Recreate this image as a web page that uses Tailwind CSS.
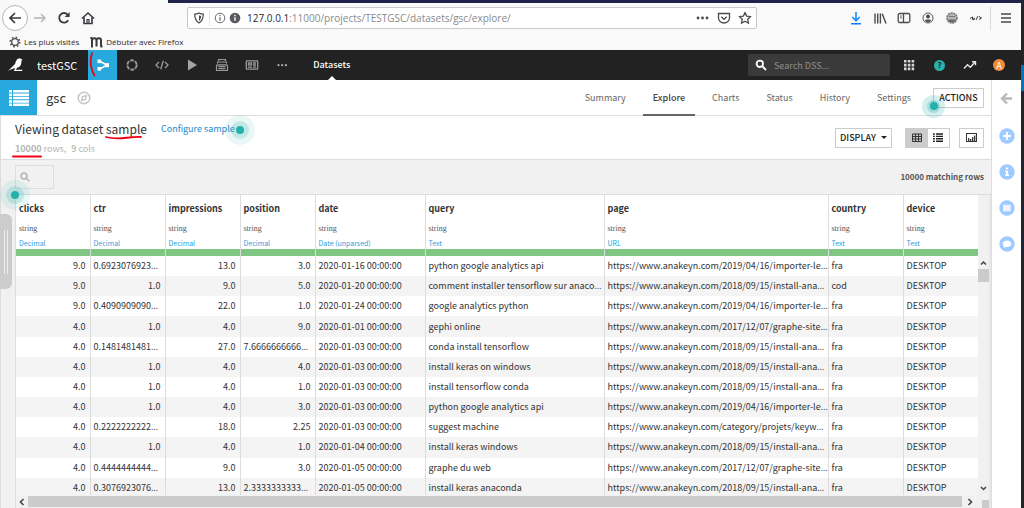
<!DOCTYPE html>
<html lang="en">
<head>
<meta charset="utf-8">
<title>gsc - Explore</title>
<meta name="viewport" content="width=device-width, initial-scale=1">
<script src="https://cdn.jsdelivr.net/npm/@tailwindcss/browser@4"></script>
</head>
<body class="h-screen overflow-hidden bg-[#f9f9fa] font-['Noto_Sans_CJK_KR',sans-serif] text-[#333]">
<div class="flex h-full">
<div class="flex min-w-0 flex-1 flex-col">

<!-- Browser chrome -->
<header class="shrink-0 bg-[#f9f9fa] font-['Open_Sans',sans-serif] text-[#38383d]">
  <div class="ml-[168px] h-[3px] bg-[#20234a]"></div>
  <div class="flex h-[30px] items-center">
    <nav class="flex w-[187px] items-center pl-[2px]" aria-label="Navigation">
      <button aria-label="Back" class="flex size-[26px] items-center justify-center rounded-full border border-[#b5b5b8] bg-white"><svg class="size-4" viewBox="0 0 16 16" fill="none" stroke="#3a3a3f" stroke-width="1.7"><path d="M14 8H3M8 3L3 8l5 5"/></svg></button>
      <button aria-label="Forward" class="ml-1 flex size-4 items-center justify-center"><svg class="size-4" viewBox="0 0 16 16" fill="none" stroke="#b4b4b7" stroke-width="1.4"><path d="M2 8h11M9 4l4 4-4 4"/></svg></button>
      <button aria-label="Reload" class="ml-2 flex size-4 items-center justify-center"><svg class="size-4" viewBox="0 0 16 16" fill="none" stroke="#3a3a3f" stroke-width="1.8"><path d="M12.2 10.2A4.8 4.8 0 1 1 11.6 4.6"/><path d="M13.6 2v5h-5z" fill="#3a3a3f" stroke="none"/></svg></button>
      <button aria-label="Home" class="ml-2 flex size-4 items-center justify-center"><svg class="size-4" viewBox="0 0 16 16" fill="none" stroke="#3a3a3f" stroke-width="1.6"><path d="M2 8.5L8 3l6 5.500M4 7.500v6h8v-6"/><path d="M7 13.500v-4h2v4" stroke-width="1.200"/></svg></button>
    </nav>
    <div class="flex h-[22px] w-[570px] items-center rounded-xs border border-[#c9c9cc] bg-white pl-1 pr-1">
      <svg class="size-3 ml-[1px]" viewBox="0 0 12 12" fill="none" stroke="#4a4a4f" stroke-width="1.200"><path d="M6 1c1.500.8 3 1.100 4.300 1.100C10.300 6.500 9 9.500 6 11 3 9.500 1.700 6.500 1.700 2.100 3 2.100 4.500 1.800 6 1z"/><path d="M6 3.300c.8.4 1.400.6 2.200.7C8 6.500 7.300 8 6 9z" fill="#4a4a4f" stroke="none"/></svg>
      <span class="ml-1 h-4 w-px bg-[#e3e3e5]"></span>
      <svg class="ml-1 size-3" viewBox="0 0 12 12" fill="none" stroke="#6a6a6e"><circle cx="6" cy="6" r="4.800"/><path d="M6 5.200v3.600M6 3v1.300" stroke-width="1.300"/></svg>
      <svg class="ml-[3px] size-3" viewBox="0 0 12 12"><circle cx="6" cy="6" r="5.300" fill="#5a5a5e"/><path d="M6 5.200v3.600M6 2.800v1.400" stroke="#fff" stroke-width="1.400"/></svg>
      <div contenteditable="true" role="textbox" aria-label="Address" class="min-w-0 flex-1 whitespace-nowrap pl-[6px] text-[10px] leading-4 text-[#8a8a8d]"><span class="text-[#2a2a2e]">127.0.0.1</span>:11000/projects/TESTGSC/datasets/gsc/explore/</div>
      <button aria-label="Page actions"><svg class="h-4 w-[14px]" viewBox="0 0 14 16" fill="#4a4a4f"><circle cx="3" cy="8" r="1.400"/><circle cx="7.500" cy="8" r="1.400"/><circle cx="12" cy="8" r="1.400"/></svg></button>
      <button aria-label="Save to Pocket" class="ml-2"><svg class="size-[14px]" viewBox="0 0 14 14" fill="none" stroke="#4a4a4f" stroke-width="1.300"><path d="M1.500 2.500h11V7a5.500 5 0 0 1-11 0z"/><path d="M4.300 5.700L7 8.300l2.700-2.600"/></svg></button>
      <button aria-label="Bookmark this page" class="ml-[7px]"><svg class="size-[14px]" viewBox="0 0 14 14" fill="none" stroke="#4a4a4f" stroke-width="1.300" stroke-linejoin="round"><path d="M7 1.500l1.700 3.700 4 .4-3 2.700.9 4L7 10.200l-3.600 2.100.9-4-3-2.700 4-.4z"/></svg></button>
    </div>
    <div class="ml-auto flex items-center text-[#4a4a4f]">
      <button aria-label="Downloads"><svg class="size-[14px]" viewBox="0 0 14 14" fill="none" stroke="#0a84ff" stroke-width="1.500"><path d="M7 1v8.500M3.300 6L7 9.700 10.700 6M2 12.700h10"/></svg></button>
      <button aria-label="Library" class="ml-[10px]"><svg class="size-[14px]" viewBox="0 0 14 14" fill="none" stroke="#4a4a4f" stroke-width="1.400"><path d="M2 2.500v10M4.700 2.500v10M7.400 2.500v10M9.200 2.700l3.800 9.800"/></svg></button>
      <button aria-label="Sidebars" class="ml-[10px]"><svg class="size-[14px]" viewBox="0 0 14 14" fill="none" stroke="#4a4a4f" stroke-width="1.300"><rect x="1.200" y="2.500" width="11.600" height="9" rx="1.500"/><path d="M6.500 2.500v9"/><path d="M3 5h2M3 6.800h2" stroke-width=".8"/></svg></button>
      <button aria-label="Account" class="ml-[10px]"><svg class="size-[14px]" viewBox="0 0 14 14"><circle cx="7" cy="7" r="5" fill="none" stroke="#5a5a5e"/><circle cx="7" cy="5.600" r="2" fill="#4a4a4f"/><path d="M3.700 9.600c1-1.500 5.600-1.500 6.600 0A4.200 4.200 0 0 1 3.700 9.600z" fill="#4a4a4f"/></svg></button>
      <button aria-label="Extension" class="ml-[10px]"><svg class="size-[14px]" viewBox="0 0 14 14"><circle cx="7" cy="7" r="5" fill="#b7b7b9" stroke="#77777a" stroke-width="1.600" stroke-dasharray="2 .7"/><path d="M3 8.500h8c-.5 2.500-2.300 3-4 3s-3.500-.5-4-3z" fill="#6a6a6c"/><path d="M4 5.500h6" stroke="#777"/></svg></button>
      <button aria-label="Developer tools" class="ml-[10px]"><svg class="size-[14px]" viewBox="0 0 14 14" fill="none" stroke="#3a3a3f" stroke-width="1"><path d="M1 7.500L3.500 6v2.500L6 7M7 9l2-4M10 5.500L12.500 7 10 8.500M3.500 8.500h2"/></svg></button>
      <span class="ml-[7px] h-6 w-px bg-[#dadadc]"></span>
      <button aria-label="Open menu" class="ml-2 mr-2"><svg class="size-[14px]" viewBox="0 0 14 14" stroke="#4a4a4f" stroke-width="1.300"><path d="M2 3h10M2 7h10M2 11h10"/></svg></button>
    </div>
  </div>
  <div class="flex h-[17px] items-center pl-[9px] text-[8px] leading-4 text-[#2a2a2e]">
    <a href="#" class="flex items-center whitespace-nowrap"><svg class="size-3" viewBox="0 0 12 12" fill="none" stroke="#4a4a4f"><circle cx="6" cy="6" r="3.300" stroke-width="1.300"/><circle cx="6" cy="6" r="4.800" stroke-width="1.400" stroke-dasharray="1.600 2.170"/></svg><span class="ml-[3px]">Les plus visités</span></a>
    <a href="#" class="ml-[11px] flex items-center whitespace-nowrap"><svg class="h-3 w-[13px]" viewBox="0 0 13 12" fill="none" stroke="#3a3a3f" stroke-width="2"><path d="M2 10.500V2M6.500 10.500V4.500Q6.500 2.300 4.500 2.300 2 2.300 2 4.500M11 10.500V4.500Q11 2.300 9 2.300 6.500 2.300 6.500 4.500M.3 2h2M1 10.500h2M10.500 10.500h2"/></svg><span class="ml-[3px]">Débuter avec Firefox</span></a>
  </div>
</header>

<!-- Application bar -->
<nav class="flex h-[30px] shrink-0 items-center bg-[#222] text-[11px] leading-4 text-white" aria-label="Project">
  <a href="#" aria-label="Home" class="ml-[7px]"><svg class="size-[18px]" viewBox="0 0 18 18"><path d="M.8 15.200L8 8C8.900 4.600 10.300 2.300 12.500 2.300c.9 0 1.500.4 1.800 1l1.500.5-1.300.6c.1 4.100-1.300 6.600-4.300 7.400l-1.500 2h6.500v1.100H6.800l1.500-2.600C5.800 12.600 3.400 13.500.8 15.200z" fill="#fff"/></svg></a>
  <a href="#" class="ml-3">testGSC</a>
  <a href="#" aria-label="Flow" class="relative ml-[11px] flex h-full w-[29px] items-center justify-center bg-[#28a9dd]">
    <svg class="size-[14px]" viewBox="0 0 14 14"><path d="M3.500 3L11 7.200 3.500 11" fill="none" stroke="#fff" stroke-width="1.600"/><rect x="1.500" y="1.500" width="3.600" height="3.600" fill="#fff"/><rect x="1.500" y="9" width="3.600" height="3.600" fill="#fff"/><rect x="9" y="5.200" width="4" height="4" fill="#fff"/></svg>
    <svg class="absolute left-[1px] top-[1px] h-[26px] w-2" viewBox="0 0 8 26" fill="none" stroke="#f00012" stroke-width="1.800" stroke-linecap="round"><path d="M3 2C.5 9 1.500 18 5.500 24.500"/></svg>
  </a>
  <a href="#" aria-label="Lab" class="ml-2"><svg class="size-[14px]" viewBox="0 0 14 14" fill="none" stroke="#9a9a9a" stroke-width="1.900"><circle cx="7" cy="7" r="4.700" stroke-dasharray="3.900 1.020"/></svg></a>
  <a href="#" aria-label="Code" class="ml-4"><svg class="size-[14px]" viewBox="0 0 14 14" fill="none" stroke="#9a9a9a" stroke-width="1.300"><path d="M4 4L1 7l3 3M10 4l3 3-3 3M8.300 2.700L5.700 11.300"/></svg></a>
  <a href="#" aria-label="Jobs" class="ml-4"><svg class="size-[14px]" viewBox="0 0 14 14" fill="#a3a3a3"><path d="M3 1.500L12 7l-9 5.500z"/></svg></a>
  <a href="#" aria-label="Automation" class="ml-4"><svg class="size-[14px]" viewBox="0 0 14 14" fill="none" stroke="#9a9a9a" stroke-width="1.200"><path d="M3.500 3V1.500h7V3M2.500 5.500V4h9v1.500M1.500 12.500V8q0-1.200 1-1.200h9q1 0 1 1.200v4.500z"/><path d="M3.500 8.700h7M3.500 10.600h7"/></svg></a>
  <a href="#" aria-label="Dashboards" class="ml-4"><svg class="size-[14px]" viewBox="0 0 14 14" fill="none" stroke="#9a9a9a" stroke-width="1.300"><rect x="1.300" y="2.800" width="11.400" height="8.400" rx=".6"/><rect x="3.500" y="5" width="3" height="2"/><path d="M3 9.200h4M8 5h3M8 7h3M8 9.200h3"/></svg></a>
  <a href="#" aria-label="More" class="ml-4"><svg class="size-[14px]" viewBox="0 0 14 14" fill="#b0b0b0"><circle cx="3.500" cy="7.200" r="1.100"/><circle cx="7.200" cy="7.200" r="1.100"/><circle cx="10.900" cy="7.200" r="1.100"/></svg></a>
  <a href="#" class="relative ml-6 flex h-full items-center text-[9px] font-medium">Datasets<span class="absolute bottom-0 left-1/2 -ml-1 border-x-4 border-b-4 border-x-transparent border-b-white"></span></a>
  <label class="ml-auto flex h-[22px] w-[142px] items-center rounded-xs bg-[#3a3a3a] pl-[7px]">
    <svg class="size-3 shrink-0" viewBox="0 0 12 12" fill="none" stroke="#fff" stroke-width="1.800"><circle cx="4.800" cy="4.800" r="3.200"/><path d="M7.200 7.200l3.800 3.800"/></svg>
    <input type="text" aria-label="Search DSS" placeholder="Search DSS..." class="ml-[7px] h-5 w-full min-w-0 bg-transparent text-[9px] text-white outline-none placeholder:text-[#8f8f8f]">
  </label>
  <button aria-label="Applications" class="ml-[13px]"><svg class="size-3" viewBox="0 0 12 12" fill="#d5d5d5"><path d="M1 1h2.600v2.600H1zM4.800 1h2.600v2.600H4.800zM8.600 1h2.600v2.600H8.600zM1 4.800h2.600v2.600H1zM4.800 4.800h2.600v2.600H4.800zM8.600 4.800h2.600v2.600H8.600zM1 8.600h2.600v2.600H1zM4.800 8.600h2.600v2.600H4.800zM8.600 8.600h2.600v2.600H8.600z"/></svg></button>
  <button aria-label="Help" class="ml-[19px] flex size-[11px] items-center justify-center rounded-full bg-[#2ab1ac] text-[8px] font-bold leading-none text-[#222]">?</button>
  <button aria-label="Activity" class="ml-[18px]"><svg class="size-[14px]" viewBox="0 0 14 14" fill="none" stroke="#e5e5e5" stroke-width="1.400"><path d="M1 10.500l3.500-3.800 2.800 2.500L12 4.200M9 3.700h3.500v3.500"/></svg></button>
  <button aria-label="Account menu" class="ml-4 mr-4 flex size-3 items-center justify-center rounded-full bg-[#f28c38] text-[9px] leading-none text-white">A</button>
</nav>

<div class="flex min-h-0 flex-1 bg-white">
<main class="flex min-w-0 flex-1 flex-col border-r border-[#ddd]">

  <!-- Dataset title and tabs -->
  <div class="flex h-9 shrink-0 border-b border-[#ddd]">
    <a href="#" aria-label="Dataset" class="flex w-[37px] items-center justify-center bg-[#28a9dd]"><svg class="h-4 w-5" viewBox="0 0 20 16" fill="#fff"><path d="M0 0h3v2.500H0zM4 0h16v2.500H4zM0 3.400h3v2.500H0zM4 3.400h16v2.500H4zM0 6.800h3v2.500H0zM4 6.800h16v2.500H4zM0 10.200h3v2.500H0zM4 10.200h16v2.500H4zM0 13.500h3V16H0zM4 13.500h16V16H4z"/></svg></a>
    <h1 class="ml-[9px] self-center text-[13px] leading-5">gsc</h1>
    <button aria-label="Navigate" class="ml-[11px]"><svg class="size-[14px]" viewBox="0 0 14 14" fill="none" stroke="#c4c4c4"><circle cx="7" cy="7" r="5.800" stroke-width="1.400"/><path d="M4.600 9.400L5.600 5.600l3.800-1-1 3.800z" stroke-width="1.300"/></svg></button>
    <nav class="ml-auto flex items-stretch text-[9px] text-[#666]" aria-label="Dataset views">
      <a href="#" class="flex items-center px-[10px]">Summary</a>
      <a href="#" aria-current="page" class="-mb-px ml-[7px] flex items-center border-b-2 border-[#666] px-[10px] pt-px font-medium text-[#444]">Explore</a>
      <a href="#" class="ml-[7px] flex items-center px-[10px]">Charts</a>
      <a href="#" class="ml-[7px] flex items-center px-[10px]">Status</a>
      <a href="#" class="ml-[7px] flex items-center px-[10px]">History</a>
      <a href="#" class="ml-[7px] flex items-center px-[10px]">Settings</a>
    </nav>
    <div class="relative ml-3 mr-[7px] self-center">
      <button class="flex h-5 w-[51px] items-center justify-center border border-[#ccc] text-[9px] font-medium text-[#222]">ACTIONS</button>
      <span class="absolute -left-[11px] top-[7px] flex size-[23px] items-center justify-center rounded-full bg-[#26b0ab]/20"><span class="flex size-[13px] items-center justify-center rounded-full bg-[#26b0ab]/30"><span class="size-2 rounded-full bg-[#26b0ab]"></span></span></span>
    </div>
  </div>

  <!-- Sample summary and display controls -->
  <div class="flex h-11 shrink-0 items-center border-b border-l border-[#ddd] pl-[14px] pr-[7px]">
    <div>
      <div class="flex items-center">
        <h2 class="relative text-xs leading-5">Viewing dataset sample<svg class="absolute -bottom-[3px] right-[2px] h-2 w-10" viewBox="0 0 40 8" fill="none" stroke="#f00012" stroke-width="1.800" stroke-linecap="round"><path d="M1 3C14 6.500 22 2.500 36 3"/></svg></h2>
        <a href="#" class="relative ml-[14px] text-[9px] leading-4 text-[#1f87cc]">Configure sample<span class="absolute -right-[20px] -top-[6px] flex size-[30px] items-center justify-center rounded-full bg-[#26b0ab]/10"><span class="flex size-[18px] items-center justify-center rounded-full bg-[#26b0ab]/20"><span class="size-2 rounded-full bg-[#26b0ab]"></span></span></span></a>
      </div>
      <p class="relative mt-[2px] flex text-[9px] leading-4 text-[#b5b5b5]"><span><b class="font-bold">10000</b> rows,</span><span class="ml-[5px]"><b class="font-medium">9</b> cols</span><svg class="absolute -left-1 top-[13px] h-1 w-8" viewBox="0 0 32 4" fill="none" stroke="#f00012" stroke-width="2" stroke-linecap="round"><path d="M2 2.500h28"/></svg></p>
    </div>
    <button class="ml-auto flex h-5 w-[57px] items-center justify-center gap-[5px] border border-[#ccc] text-[9px] font-medium text-[#222]">DISPLAY<span class="border-x-[3px] border-t-[3px] border-x-transparent border-t-[#222]"></span></button>
    <div class="ml-[13px] flex h-5 w-[45px] border border-[#ccc]">
      <button aria-label="Table view" class="flex flex-1 items-center justify-center bg-[#ccc]"><svg class="h-[9px] w-[10px]" viewBox="0 0 10 9" fill="none" stroke="#333"><path d="M.5 1h9v7.500h-9zM.5 3.500h9M.5 6h9M3.500 1v7.500M6.500 1v7.500"/></svg></button>
      <button aria-label="List view" class="flex flex-1 items-center justify-center"><svg class="h-[9px] w-[10px]" viewBox="0 0 10 9" fill="none" stroke="#222" stroke-width="1.400"><path d="M0 1h1.800M3 1h7M0 3.400h1.800M3 3.400h7M0 5.800h1.800M3 5.800h7M0 8.200h1.800M3 8.200h7"/></svg></button>
    </div>
    <button aria-label="Column statistics" class="ml-[9px] flex h-5 w-[25px] items-center justify-center border border-[#ccc]"><svg class="h-[9px] w-[11px]" viewBox="0 0 11 9" fill="none" stroke="#333"><rect x=".5" y=".5" width="10" height="8"/><path d="M2.700 8V5M4.700 8V6M6.700 8V4M8.700 8V2.500" stroke-width="1.300"/></svg></button>
  </div>

  <!-- Data explorer -->
  <div class="flex min-h-0 flex-1 border-l border-[#ddd] bg-[#f1f1f1]">
    <div class="relative w-[14px] shrink-0">
      <button aria-label="Open filters" class="absolute -left-px top-[54px] flex h-[75px] w-3 items-center justify-center gap-[2px] rounded-r-md bg-[#ccc]"><span class="h-11 w-px bg-[#eee]"></span><span class="h-11 w-px bg-[#eee]"></span></button>
    </div>
    <div class="flex min-w-0 flex-1 flex-col">
      <div class="relative flex h-[34px] shrink-0 items-center pr-[7px]">
        <label class="flex h-6 w-[39px] items-center border border-[#ddd] pl-1">
          <svg class="size-[10px] shrink-0" viewBox="0 0 10 10" fill="none" stroke="#b5b5b5" stroke-width="1.500"><circle cx="4" cy="4" r="3"/><path d="M6.200 6.200L9.300 9.300"/></svg>
          <input type="text" aria-label="Search columns" class="h-5 w-full min-w-0 bg-transparent text-[9px] outline-none">
        </label>
        <p class="ml-auto text-[8px] font-bold leading-4 text-[#555]">10000 matching rows</p>
        <span class="absolute -left-[15px] top-[20px] z-10 flex size-[30px] items-center justify-center rounded-full bg-[#26b0ab]/10"><span class="flex size-[18px] items-center justify-center rounded-full bg-[#26b0ab]/20"><span class="size-2 rounded-full bg-[#26b0ab]"></span></span></span>
      </div>
      <div class="flex min-h-0 flex-1 border-t border-[#ddd]">
        <div class="flex min-w-0 flex-1 flex-col">
          <div class="min-h-0 flex-1 overflow-hidden border-l border-[#ddd]">
            <table class="h-[303px] w-full table-fixed border-collapse bg-white text-[9px] leading-4">
              <colgroup><col class="w-[74px]"><col class="w-[75px]"><col class="w-[75px]"><col class="w-[75px]"><col class="w-[110px]"><col class="w-[179px]"><col class="w-[224px]"><col class="w-[75px]"><col class="w-[75px]"></colgroup>
              <thead id="columns"></thead>
              <tbody id="rows"></tbody>
            </table>
          </div>
          <div class="flex h-[13px] shrink-0 items-center border-l border-[#ddd] bg-[#f1f1f1]">
            <svg class="w-3 shrink-0" viewBox="0 0 12 12" fill="none" stroke="#444" stroke-width="1.600"><path d="M7.500 3L4.500 6l3 3"/></svg>
            <span class="h-[11px] flex-1 bg-[#cbcbcb]"></span>
            <svg class="w-4 shrink-0" viewBox="0 0 16 12" fill="none" stroke="#444" stroke-width="1.600"><path d="M6.500 3l3 3-3 3"/></svg>
          </div>
        </div>
        <div class="flex w-[11px] shrink-0 flex-col bg-[#f1f1f1] pt-[62px]">
          <svg class="h-3 w-full shrink-0" viewBox="0 0 11 12" fill="none" stroke="#444" stroke-width="1.500"><path d="M3 7.500L5.500 5 8 7.500"/></svg>
          <span class="h-[13px] w-full shrink-0 bg-[#cbcbcb]"></span>
          <svg class="mt-auto h-3 w-full shrink-0" viewBox="0 0 11 12" fill="none" stroke="#444" stroke-width="1.500"><path d="M3 4L5.500 6.500 8 4"/></svg>
          <span class="ml-1 mt-[5px] h-2 w-[7px] shrink-0 bg-[#cbcbcb]"></span>
        </div>
        <div class="w-[2px] shrink-0 bg-[#e8e8e8]"></div>
      </div>
    </div>
  </div>
</main>

<!-- Right action rail -->
<aside class="flex w-[29px] shrink-0 flex-col items-center bg-white pt-3">
  <button aria-label="Open panel"><svg class="size-[13px]" viewBox="0 0 13 13" fill="none" stroke="#b9b9b9" stroke-width="2.400"><path d="M12 6.500H3M7 1.500l-5 5 5 5"/></svg></button>
  <button aria-label="Actions" class="mt-[23px]"><svg class="size-4" viewBox="0 0 16 16"><circle cx="8" cy="8" r="7.700" fill="#9dcaff"/><path d="M8 4v8M4 8h8" stroke="#fff" stroke-width="2.200"/></svg></button>
  <button aria-label="Details" class="mt-5"><svg class="size-4" viewBox="0 0 16 16"><circle cx="8" cy="8" r="7.700" fill="#9dcaff"/><path d="M7 3.500h2.200v2H7zM6 6.700h3.200v4.100h1V12H6v-1.200h1V7.900H6z" fill="#fff"/></svg></button>
  <button aria-label="Schema" class="mt-5"><svg class="size-4" viewBox="0 0 16 16"><circle cx="8" cy="8" r="7.700" fill="#9dcaff"/><path d="M4 4.500h8v7H4z" fill="#d9ebff"/><path d="M4 6.500h6M4 8.200h6M4 10h6" stroke="#fff" stroke-width="1"/></svg></button>
  <button aria-label="Discussions" class="mt-5"><svg class="size-4" viewBox="0 0 16 16"><circle cx="8" cy="8" r="7.700" fill="#9dcaff"/><path d="M8 4.500c2.600 0 4.300 1.400 4.300 3.200S10.600 11 8 11c-.5 0-.9 0-1.300-.1L4.500 12l.5-1.900c-.8-.6-1.300-1.400-1.300-2.400C3.700 5.900 5.400 4.500 8 4.500z" fill="#fff"/></svg></button>
</aside>
</div>
</div>

<!-- Desktop strip beside the window -->
<div class="flex w-[3px] shrink-0 flex-col bg-[#20262b]"><span class="mt-[65px] h-[26px] bg-[#0a74b8]"></span></div>
</div>

<script>
const columns = [["clicks","Decimal"],["ctr","Decimal"],["impressions","Decimal"],["position","Decimal"],["date","Date (unparsed)"],["query","Text"],["page","URL"],["country","Text"],["device","Text"]];
const importer = "https://www.anakeyn.com/2019/04/16/importer-le…";
const install = "https://www.anakeyn.com/2018/09/15/install-ana…";
const graphe = "https://www.anakeyn.com/2017/12/07/graphe-site…";
const keyw = "https://www.anakeyn.com/category/projets/keyw…";
const rows = [
["9.0","0.6923076923…","13.0","3.0","2020-01-16","python google analytics api",importer,"fra"],
["9.0","1.0","9.0","5.0","2020-01-20","comment installer tensorflow sur anaco…",install,"cod"],
["9.0","0.4090909090…","22.0","1.0","2020-01-24","google analytics python",importer,"fra"],
["4.0","1.0","4.0","9.0","2020-01-01","gephi online",graphe,"fra"],
["4.0","0.1481481481…","27.0","7.6666666666…","2020-01-03","conda install tensorflow",install,"fra"],
["4.0","1.0","4.0","4.0","2020-01-03","install keras on windows",install,"fra"],
["4.0","1.0","4.0","1.0","2020-01-03","install tensorflow conda",install,"fra"],
["4.0","1.0","4.0","3.0","2020-01-03","python google analytics api",importer,"fra"],
["4.0","0.2222222222…","18.0","2.25","2020-01-03","suggest machine",keyw,"fra"],
["4.0","1.0","4.0","1.0","2020-01-04","install keras windows",install,"fra"],
["4.0","0.4444444444…","9.0","3.0","2020-01-05","graphe du web",graphe,"fra"],
["4.0","0.3076923076…","13.0","2.3333333333…","2020-01-05","install keras anaconda",install,"fra"]];
document.getElementById("columns").innerHTML =
  '<tr class="h-[54px]">' + columns.map(([n,t]) => `<th scope="col" class="whitespace-nowrap border-r border-[#ddd] pl-[3px] pt-[6px] text-left align-top font-normal"><div class="text-[9px] font-bold leading-4">${n}</div><div class="mt-1 font-['Liberation_Serif',serif] text-[8px] leading-4 text-[#555]">string</div><div class="text-[7px] leading-3 text-[#28a0dc]">${t}</div></th>`).join("") + '</tr>' +
  '<tr class="h-[7px] bg-[#81c784]">' + columns.map(() => '<td class="border-r border-[#ddd] p-0"></td>').join("") + '</tr>';
document.getElementById("rows").innerHTML = rows.map(r => {
  const cells = [...r, "DESKTOP"];
  cells[4] += " 00:00:00";
  return '<tr class="even:bg-[#f4f4f4]">' + cells.map((c, i) =>
    `<td class="${i < 4 && !c.endsWith("…") ? "whitespace-nowrap border-r border-[#ddd] py-0 pl-[3px] pr-1 text-right" : "whitespace-nowrap border-r border-[#ddd] py-0 pl-[3px]"}">${c.replace("…", `<span class="font-['Open_Sans',sans-serif] text-[9px] leading-none">…</span>`)}</td>`).join("") + '</tr>';
}).join("");
</script>
</body>
</html>
